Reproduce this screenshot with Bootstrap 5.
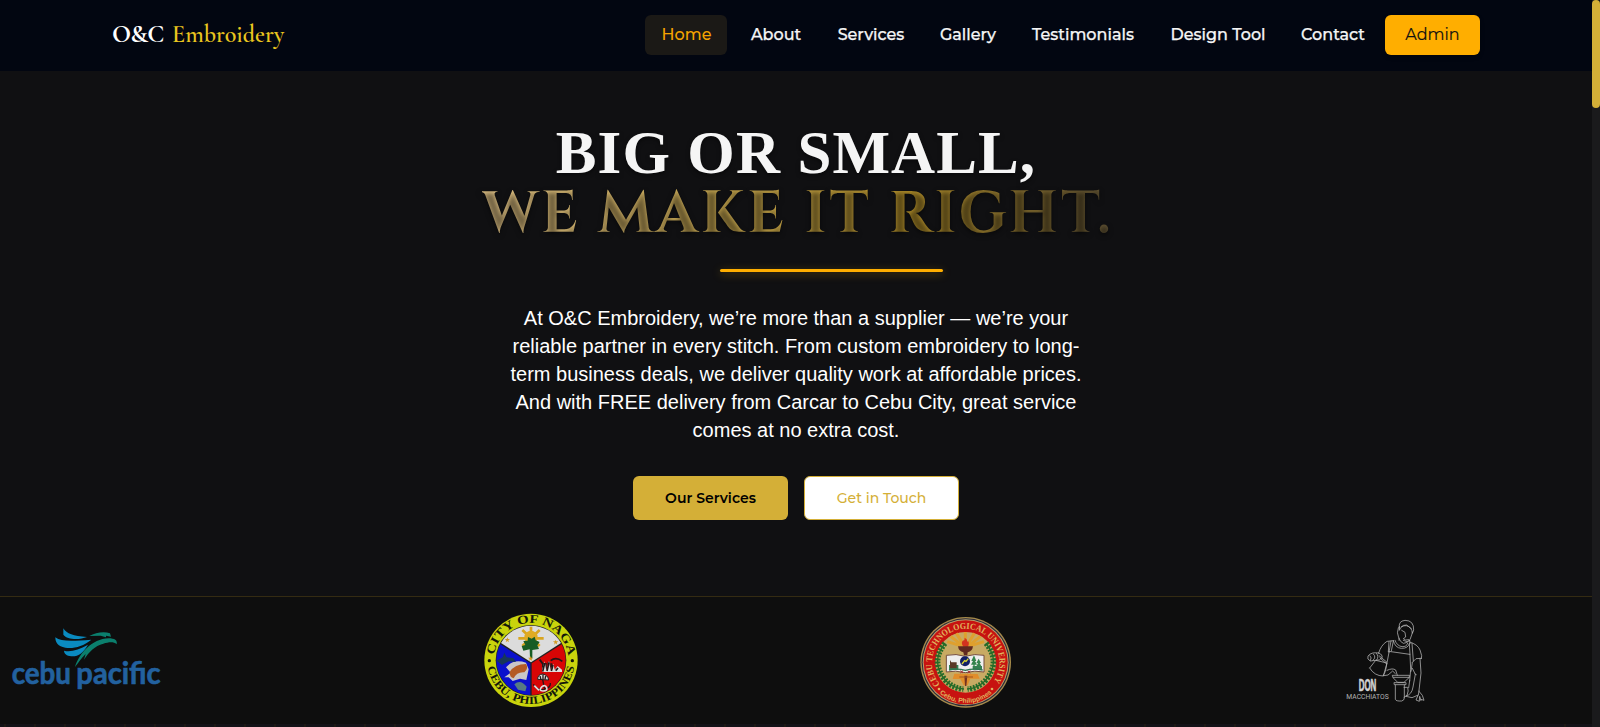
<!DOCTYPE html>
<html lang="en">
<head>
<meta charset="utf-8">
<meta name="viewport" content="width=device-width, initial-scale=1">
<title>O&amp;C Embroidery</title>
<link href="https://cdn.jsdelivr.net/npm/bootstrap@5.3.0/dist/css/bootstrap.min.css" rel="stylesheet">
<style>
body{background:#101012;height:727px;overflow:hidden;font-family:Montserrat,Inter,sans-serif}
.page{min-width:0;height:727px}
.topbar{background:#020611;height:71px;padding:0 112px 2px}
.brand{font:700 25px/40px "Cormorant Garamond","Liberation Serif",serif;color:#fff;white-space:pre}
.brand b{letter-spacing:-.85px;display:inline-block;width:60px}
.brand span{font-weight:600;color:#e9c51f;font-size:24px}
.topbar .nav-link{color:#f5f5f5;font-weight:500;font-size:16px;line-height:24px;padding:8px 0;text-align:center;border-radius:6px;white-space:nowrap;-webkit-text-stroke:.25px}
.topbar .nav-link.active{background:#1b1916;color:#f5a400;padding-left:1px;-webkit-text-stroke:0}
.admin{background:#ffae00;color:#111;width:95px;height:40px;border-radius:6px;font-size:16px;padding:7px 0;box-shadow:0 2px 4px rgba(0,0,0,.3);border:0;-webkit-text-stroke:.15px}
.hero{height:525px;padding-top:52px}
.hero h1{font:700 61px/59px "Liberation Serif",serif;height:118px;color:#f5f5f5;margin:0;text-shadow:0 2px 4px rgba(0,0,0,.5);white-space:nowrap}
.hero h1 div{height:59px}
.hero h1 .l1{letter-spacing:1.1px}
.hero h1 .l2{display:inline-block;line-height:59px;font-family:Cinzel,"Liberation Serif",serif;font-size:58px;letter-spacing:2.9px;margin-right:-3px;text-shadow:0 2px 5px rgba(0,0,0,.5);background:linear-gradient(90deg,#e6c78a 0,#c9a950 38%,#b5912a 68%,#5c4f33 100%);-webkit-background-clip:text;background-clip:text;color:transparent}
.rule{width:223px;height:3px;border-radius:2px;background:#ffae00;box-shadow:0 2px 8px rgba(255,190,0,.35);margin:28px 0 0 720px}
.lead-copy{font:400 20px/28px "Liberation Sans",Arial,sans-serif;color:#fff;margin:32px auto 0;width:600px}
.cta{width:155px;height:44px;border-radius:6px;font-size:14px;padding:0}
.cta-a,.cta-a:hover{background:#d4af37;color:#000;font-weight:600}
.cta-b,.cta-b:hover{background:#fff;color:#d4af37;border:1px solid #d4af37;font-weight:500}
.clients{border-top:1px solid #342b12;background:#0e0e0e;height:128px;display:grid;grid-template-columns:470px 435px 425px 262px}
.clients svg{display:block;height:127px}
.weave{height:3px;background:repeating-linear-gradient(90deg,#131217 0 4px,#1d1913 4px 6px,#131217 6px 30px)}
.track{width:8px;background:#1a1a1c}
.thumb{height:108px;border-radius:4px;background:#d4af37}
</style>
</head>
<body>
<div class="d-flex">
<div class="page flex-grow-1">
<nav class="topbar d-flex align-items-center justify-content-between">
  <a class="brand text-decoration-none" href="#"><b>O&amp;C</b><span>Embroidery</span></a>
  <div class="d-flex align-items-center">
    <a class="nav-link active" href="#" style="width:82px">Home</a>
    <a class="nav-link" href="#" style="width:98px">About</a>
    <a class="nav-link" href="#" style="width:92px">Services</a>
    <a class="nav-link" href="#" style="width:102px">Gallery</a>
    <a class="nav-link" href="#" style="width:128px">Testimonials</a>
    <a class="nav-link" href="#" style="width:142px">Design Tool</a>
    <a class="nav-link" href="#" style="width:88px">Contact</a>
    <button class="btn admin ms-2">Admin</button>
  </div>
</nav>
<section class="hero text-center">
  <h1><div><span class="l1">BIG OR SMALL,</span></div><div><span class="l2">WE MAKE IT RIGHT.</span></div></h1>
  <div class="rule"></div>
  <p class="lead-copy">At O&amp;C Embroidery, we’re more than a supplier — we’re your<br>reliable partner in every stitch. From custom embroidery to long-<br>term business deals, we deliver quality work at affordable prices.<br>And with FREE delivery from Carcar to Cebu City, great service<br>comes at no extra cost.</p>
  <div class="d-flex justify-content-center gap-3 mt-4 pt-2"><button class="btn cta cta-a">Our Services</button><button class="btn cta cta-b">Get in Touch</button></div>
</section>
<section class="clients">
  <svg width="200" viewBox="0 21 600 381">
    <g fill="#0a8bc0"><path d="M190 115C200 132 220 138 261 141C238 150 202 150 190 134Z"/><path d="M166 142C184 156 220 153 274 149C248 170 222 176 196 173C174 170 166 158 166 142Z"/><path d="M192 182C212 187 236 180 264 164C250 188 236 200 214 199C199 197 193 192 192 182Z"/></g>
    <g fill="#0b7f6d"><path d="M268 138C286 128 312 123 330 130L333 140L318 137L318 142L302 137Z"/><path d="M225 231C238 190 275 147 326 145C344 145 353 151 350 163C340 154 326 157 310 161C284 168 268 184 252 209L257 192C245 204 235 218 225 231Z"/></g>
    <g fill="#22619f" font-family="Lato,sans-serif" font-weight="700" font-size="90" stroke="#22619f" stroke-width="2"><text x="35" y="283" textLength="178" lengthAdjust="spacingAndGlyphs">cebu</text><text x="229" y="283" textLength="253" lengthAdjust="spacingAndGlyphs">pacific</text></g>
  </svg>
  <svg width="120" viewBox="0 21 360 381">
    <defs><path id="n1" d="M71 211A112 112 0 0 1 295 211"/><path id="n2" d="M52 211A131 131 0 0 0 314 211"/></defs>
    <circle cx="183" cy="211" r="140" fill="#c9d40c"/>
    <circle cx="183" cy="211" r="106" fill="#222"/>
    <path d="M183 217L93 159A104 104 0 0 1 273 159Z" fill="#dcdcdc"/>
    <path d="M181 220V315A104 104 0 0 1 91 163Z" fill="#0b10cc"/>
    <path d="M185 220V315A104 104 0 0 0 275 163Z" fill="#d80505"/>
    <g stroke="#d9a520" stroke-width="8"><path d="M183 110V160M145 145H221M157 120L209 168M209 120L157 168"/></g><circle cx="183" cy="142" r="20" fill="#e0ab22"/>
    <path d="M180 205L179 178L160 182L155 168L166 165L160 153L173 152L174 141L185 146L194 140L197 151L209 156L202 166L207 177L187 180L187 205Z" fill="#175c24"/>
    <path d="M112 142l2 5 6 0-5 4 2 6-5-4-5 4 2-6-5-4 6 0ZM257 149l2 5 6 0-5 4 2 6-5-4-5 4 2-6-5-4 6 0ZM182 198l2 5 6 0-5 4 2 6-5-4-5 4 2-6-5-4 6 0Z" fill="#d09a25"/>
    <path d="M108 232Q130 205 168 218L176 238L169 270L150 266L128 273L116 262L103 262L122 248Z" fill="#c9c6c8"/><path d="M119 246Q134 222 168 222Q177 235 163 247Q140 245 131 265Q118 262 119 246Z" fill="#b45b25"/><path d="M80 212l18-10 5-14 7 14 20 2 8 12-22-2-20 11Z" fill="#17365a"/><path d="M133 283Q151 266 170 290L166 304L144 299Z" fill="#577a83"/>
    <path d="M209 209L219 222V244M227 219V244M236 215V246M244 220V244" stroke="#241819" stroke-width="6" fill="none"/><path d="M216 239L224 214L229 242L237 212L242 241L250 221L254 239L263 228L276 239V246H216Z" fill="#ddd"/><path d="M218 245L224 219M231 243L237 218M244 243L249 225M257 242L264 234M242 212Q258 199 277 214" stroke="#221516" stroke-width="5" fill="none"/>
    <path d="M203 268Q203 253 218 252Q234 255 236 270Z" fill="#ddd" stroke="#222" stroke-width="3"/><path d="M218 269L224 298M190 283Q205 304 224 298Q243 292 241 279M219 253V268M210 258L213 269M227 258L225 268" fill="none" stroke="#281718" stroke-width="4"/><path d="M216 290q10-7 14 3t-11 10-3-13M193 287l14 14" stroke="#ddd" stroke-width="5" fill="none"/>
    <g fill="#14180a" font-family="'Liberation Serif',serif" font-weight="700" font-size="36"><text><textPath href="#n1" startOffset="16" textLength="322" lengthAdjust="spacingAndGlyphs">CITY OF NAGA</textPath></text><text font-size="33"><textPath href="#n2" startOffset="20" textLength="372" lengthAdjust="spacingAndGlyphs">CEBU, PHILIPPINES</textPath></text></g>
    <circle cx="58" cy="212" r="5" fill="#14180a"/><circle cx="307" cy="212" r="5" fill="#14180a"/>
  </svg>
  <svg width="120" viewBox="0 21 360 381">
    <defs><path id="c1" d="M105 283A101 101 0 1 1 259 283"/><path id="c2" d="M73 269A120 120 0 0 0 291 269"/></defs>
    <circle cx="182" cy="217" r="136" fill="#a68b4b"/><circle cx="182" cy="217" r="132" fill="#29273b"/><circle cx="182" cy="217" r="129" fill="#b6a06a"/><circle cx="182" cy="217" r="126" fill="#c71310"/><circle cx="182" cy="217" r="91" fill="#c8aa63"/>
    <g stroke="#dfa02e" stroke-width="9"><path d="M176 170L127 155M176 170L137 139M178 168L154 130M181 168V126M185 168L208 130M188 170L226 139M188 170L237 155"/></g>
    <path d="M175 170Q166 158 175 151Q179 154 179 143Q188 148 186 155Q193 151 191 165L188 171Z" fill="#d3331f"/><path d="M159 169H204Q202 184 188 187L187 196H177L175 187Q161 184 159 169Z" fill="#60291f"/>
    <path d="M148 251L218 252L224 266L196 266L188 286H176L166 267L143 267Z" fill="#e18e2b"/><path d="M178 257H187L184 288H180Z" fill="#723221"/><path d="M163 261H204" stroke="#a35522" stroke-width="3"/>
    <path d="M124 196Q154 190 181 199Q209 190 237 196V246Q210 240 181 248Q151 240 124 246Z" fill="#eee" stroke="#744c3d" stroke-width="3"/>
    <path d="M132 225H160V240H132ZM203 228H231V239H203Z" fill="#348052"/><path d="M135 223V210L139 217H155V235H135Z" fill="#5a3826"/><path d="M207 196L199 213H204L198 224H205V234H209V224H216L210 213H214ZM221 206L214 219H219L214 229H229L224 219H228Z" fill="#34844d"/><path d="M132 240Q157 234 181 241Q205 234 233 240" stroke="#2d754f" stroke-width="4" fill="none"/>
    <circle cx="180" cy="214" r="15" fill="#111f65"/><path d="M171 222L179 212L183 214L190 206" stroke="#d9d532" stroke-width="4" fill="none"/><path d="M166 242L174 249M174 242L166 249M188 242L196 249M196 242L188 249" stroke="#a72d30" stroke-width="3"/>
    <g fill="none" stroke="#246b28"><path d="M120 160Q74 217 123 273Q147 296 177 297M243 160Q289 217 240 273Q216 296 186 297" stroke-width="4"/><path d="M120 160Q74 217 123 273Q147 296 175 297M243 160Q289 217 240 273Q216 296 188 297" stroke-width="17" stroke-dasharray="6 4"/></g>
    <g font-family="'Liberation Serif',serif" font-weight="700" fill="#e0b35f"><text font-size="27"><textPath href="#c1" startOffset="0" textLength="448" lengthAdjust="spacingAndGlyphs">CEBU TECHNOLOGICAL UNIVERSITY</textPath></text><text font-family="'Liberation Sans',sans-serif" font-weight="700" font-size="20"><textPath href="#c2" startOffset="51" textLength="172" lengthAdjust="spacingAndGlyphs">Cebu, Philippines</textPath></text></g>
    <circle cx="102" cy="297" r="4" fill="#e0b35f"/><circle cx="261" cy="297" r="4" fill="#e0b35f"/>
  </svg>
  <svg width="262" viewBox="0 21 786 381">
    <g fill="none" stroke="#b5b5b5" stroke-width="2.3" stroke-linecap="round" stroke-linejoin="round">
      <path d="M208 114Q204 93 225 91Q252 91 251 120L247 130Q246 111 229 107Q213 106 208 121V109M205 113Q199 129 206 143Q211 157 220 160Q232 160 240 149L248 126M215 121L225 127L227 141L220 146L227 150L236 149M213 111Q220 104 230 105L244 116M220 151L231 155L239 151"/>
      <path d="M207 144V151M239 151L240 161M190 152Q195 174 214 175Q235 176 239 159M195 151Q201 168 216 170Q230 171 233 160M190 152L171 154Q153 165 146 189M183 153L177 187M177 155L175 185M190 153L184 183M239 156Q263 163 270 180L275 197L274 206M274 205L258 206L247 217M238 162L240 192M246 160L250 213M176 184L239 193M177 187L167 240Q165 249 160 256M240 193L242 239L239 273"/>
      <path d="M146 189Q124 185 114 198Q110 208 121 213L137 211Q149 213 157 202Q158 193 146 189M120 197Q127 203 121 212M130 192Q140 201 129 211M139 190Q149 200 139 211M147 197L170 216M150 204L170 222M119 234L137 211L171 219L160 258Q133 258 119 234M171 241Q188 233 197 240L202 256M161 257L174 255L188 243L196 251"/>
      <path d="M188 256H239L237 263L222 277H203L190 264ZM190 262H238M193 278H228V284H194ZM196 285V328Q198 334 215 333Q223 331 223 324V285M222 292L233 292Q237 302 231 316L222 322M229 318Q246 313 249 291L256 253L247 235M270 205L273 249L267 301M267 302L265 315L246 323L228 319M267 304L277 316L282 331L273 328M264 316L258 330L268 334L269 319L273 332M247 218L243 244M255 252L259 254M239 272L236 293"/>
    </g>
    <text x="86" y="302" font-family="'Liberation Sans Narrow','Liberation Sans',sans-serif" font-weight="700" font-size="49" fill="#d4d4d4" stroke="#d4d4d4" stroke-width="2" textLength="53" lengthAdjust="spacingAndGlyphs">DON</text>
    <text x="49" y="326" font-family="Roboto,sans-serif" font-size="22" fill="#b5b5b5" textLength="127" lengthAdjust="spacingAndGlyphs">MACCHIATOS</text>
  </svg>
</section>
<div class="weave"></div>
</div>
<div class="track"><div class="thumb"></div></div>
</div>
<script src="https://cdn.jsdelivr.net/npm/bootstrap@5.3.0/dist/js/bootstrap.bundle.min.js"></script>
</body>
</html>
